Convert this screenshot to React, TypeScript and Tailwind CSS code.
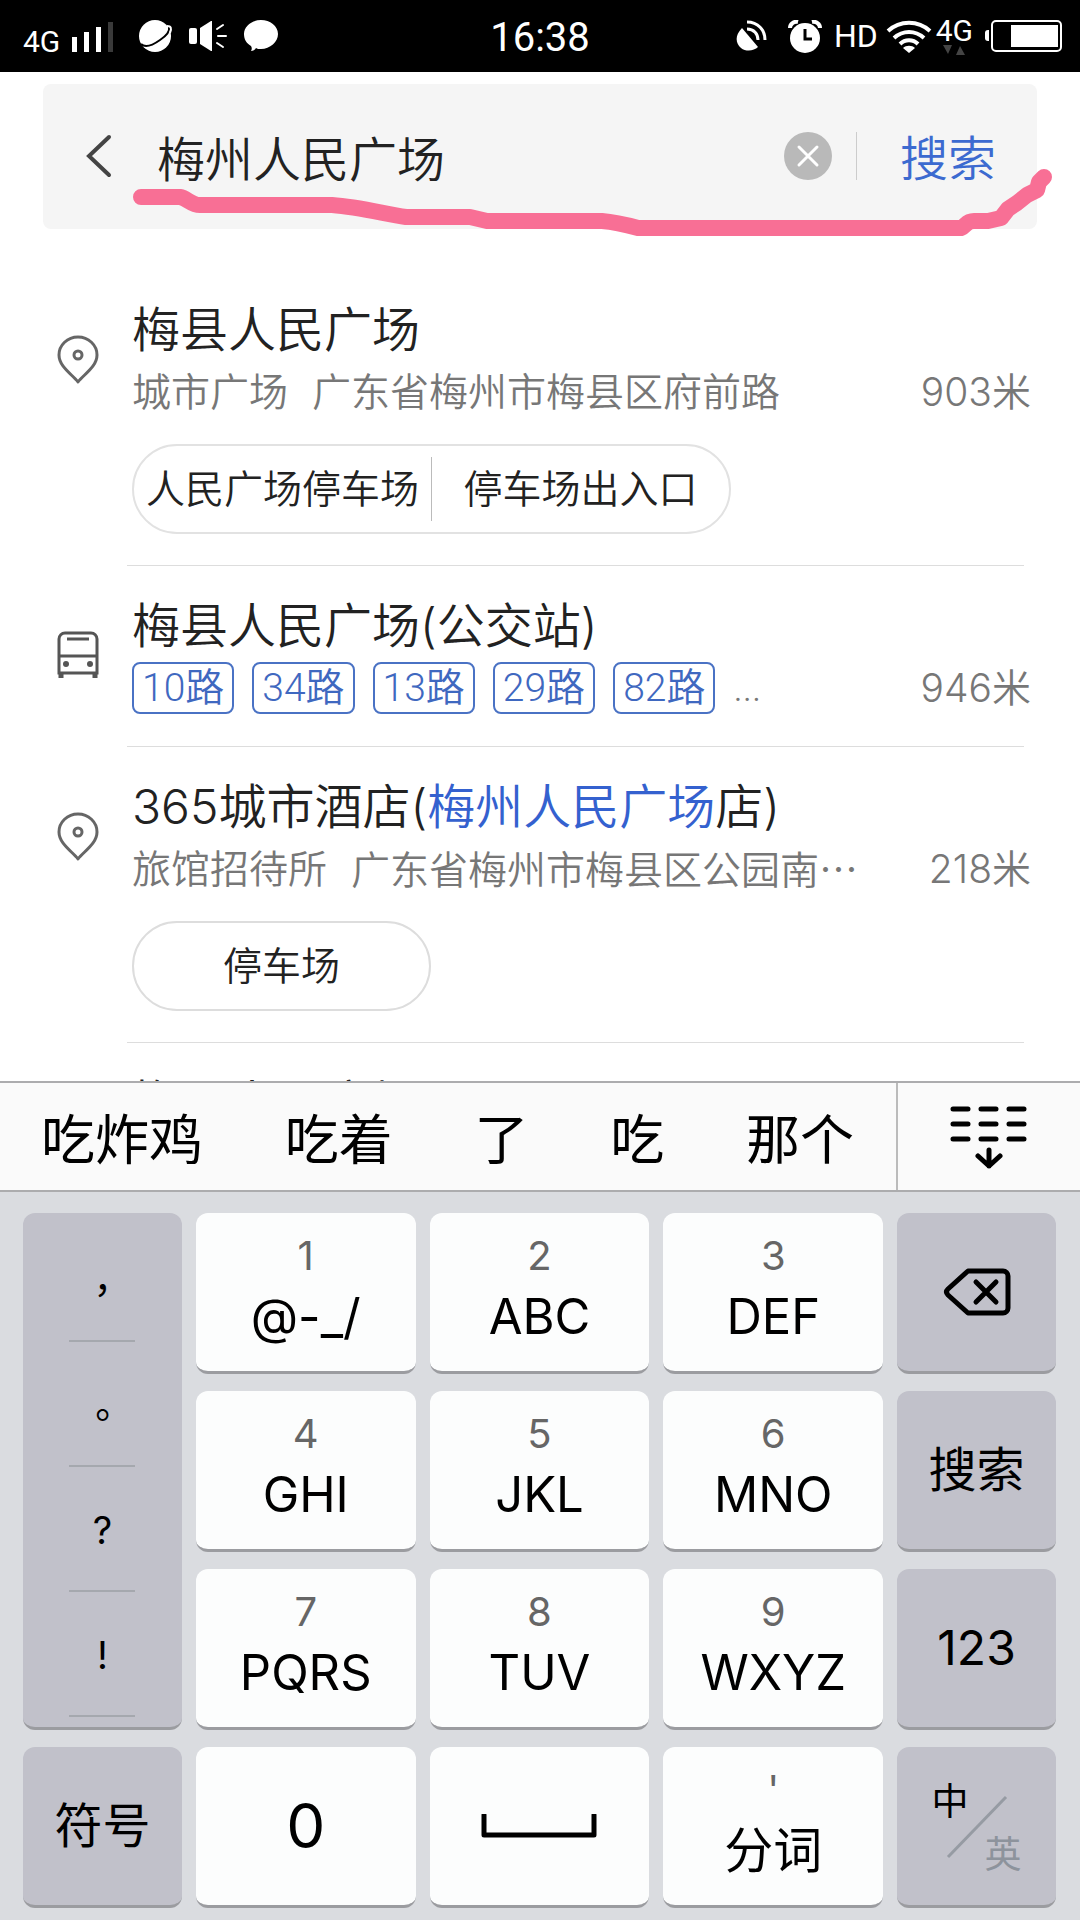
import { useState, type ReactNode } from "react";
import clsx from "clsx";

const uiFont = "font-['Roboto','Noto_Sans_CJK_SC',sans-serif]";
const keyFont = "font-['Inter','Noto_Sans_CJK_SC',sans-serif]";

const routes = ["10路", "34路", "13路", "29路", "82路"];
const candidates = ["吃炸鸡", "吃着", "了", "吃", "那个"];
const punctuation = ["，", "。", "?", "!"];

function PinIcon() {
  return (
    <svg width="42" height="50" viewBox="0 0 42 50" fill="none" stroke="#666" strokeWidth="3">
      <path d="M21 47C16 40 2 32 2 20a19 18 0 0 1 38 0C40 32 26 40 21 47Z" strokeLinejoin="round" />
      <circle cx="21" cy="20" r="4" />
    </svg>
  );
}

function BusIcon() {
  return (
    <svg width="42" height="48" viewBox="0 0 42 48" fill="none" stroke="#555" strokeWidth="3">
      <path d="M2 42V8a6 6 0 0 1 6-6h26a6 6 0 0 1 6 6v34ZM2 25h38M10 8h22" />
      <path d="M4 42v5M38 42v5" strokeWidth="5" />
      <circle cx="9" cy="33" r="3" fill="#555" stroke="none" />
      <circle cx="33" cy="33" r="3" fill="#555" stroke="none" />
    </svg>
  );
}

function StatusBar() {
  return (
    <div className="flex h-[72px] shrink-0 items-center bg-black px-[17px] text-white">
      <div className="flex flex-1 items-center">
        <span className="mt-3 ml-[6px] text-[30px] leading-none">4G</span>
        <svg className="ml-3" width="42" height="32" viewBox="0 0 42 32" fill="#fff">
          <path d="M0 17h5v15H0zM12 12h5v20h-5zM24 7h5v25h-5z" />
          <path d="M36 2h5v30h-5z" fill="#3a3a3a" />
        </svg>
        <svg className="ml-[25px]" width="34" height="34" viewBox="0 0 34 34">
          <circle cx="16" cy="17" r="16" fill="#fff" />
          <path d="M2 25c4 4 12 1 19-4 6-4 10-9 9-13" fill="none" stroke="#000" strokeWidth="2" />
          <path d="M28 7c4 0 5 2 3 7" fill="none" stroke="#fff" strokeWidth="2" />
        </svg>
        <svg className="ml-4" width="38" height="32" viewBox="0 0 38 32">
          <rect y="8" width="8" height="16" rx="2" fill="#fff" />
          <path d="M11 8 22 1h1v30h-1L11 24Z" fill="#fff" />
          <path d="m28 9 6-4M29 16h8M28 23l6 4" stroke="#fff" strokeWidth="2" strokeLinecap="round" />
        </svg>
        <svg className="ml-4" width="36" height="32" viewBox="0 0 36 32" fill="#fff">
          <path d="M18 0c9 0 17 6 17 14s-8 15-17 15c-2 0-4 0-5-1-1 2-3 3-5 3 1-2 1-3 0-5-5-3-7-7-7-12C1 6 9 0 18 0Z" />
        </svg>
      </div>
      <span className="mt-1 text-[40px] leading-none">16:38</span>
      <div className="flex flex-1 items-center justify-end">
        <svg width="32" height="32" viewBox="0 0 32 32" fill="none" stroke="#fff" strokeWidth="3">
          <path d="M6 8C-2 16 0 24 5 28s13 3 17-1Z" fill="#fff" stroke="none" />
          <path d="M11 2c11 0 18 8 18 18M11 9c7 0 11 5 11 11" />
        </svg>
        <svg className="ml-5" width="34" height="33" viewBox="0 0 34 33">
          <circle cx="17" cy="18" r="15" fill="#fff" />
          <path d="M2 8c0-4 4-7 8-6M32 8c0-4-4-7-8-6" fill="none" stroke="#fff" strokeWidth="4" />
          <path d="M17 9v10h7" fill="none" stroke="#000" strokeWidth="3" />
        </svg>
        <span className="ml-3 text-[32px] leading-none">HD</span>
        <svg className="ml-2" width="46" height="34" viewBox="0 0 46 34" fill="none" stroke="#fff" strokeWidth="4">
          <path d="M2 12c12-11 30-11 42 0M8 19c9-8 21-8 30 0M14 25c5-5 13-5 18 0" />
          <path d="m17 29 6 5 6-5c-3-3-9-3-12 0Z" fill="#fff" stroke="none" />
        </svg>
        <div className="ml-1 flex flex-col items-center">
          <span className="text-[30px] leading-7">4G</span>
          <svg width="24" height="10" viewBox="0 0 24 10" fill="#444">
            <path d="M1 0h9L6 9ZM14 10h9L18 1Z" />
          </svg>
        </div>
        <svg className="ml-3" width="78" height="32" viewBox="0 0 78 32">
          <path d="M4 10H3a3 3 0 0 0-3 3v5a3 3 0 0 0 3 3h1Z" fill="#fff" />
          <rect x="7" y="1" width="69" height="30" rx="4" fill="none" stroke="#fff" strokeWidth="2" />
          <rect x="26" y="5" width="47" height="22" fill="#fff" />
        </svg>
      </div>
    </div>
  );
}

function SearchHeader() {
  const [query, setQuery] = useState("梅州人民广场");

  return (
    <header className="relative shrink-0 px-[43px] pt-3">
      <div className="flex h-[145px] items-center rounded-lg bg-[#f5f5f5] pr-[41px] pb-[2px] pl-[41px]">
        <button type="button" aria-label="返回">
          <svg width="30" height="46" viewBox="0 0 30 46" fill="none" stroke="#444" strokeWidth="4" strokeLinecap="round">
            <path d="M25 4 5 23l20 19" />
          </svg>
        </button>
        <input
          aria-label="搜索地点"
          value={query}
          onChange={(e) => setQuery(e.target.value)}
          className="ml-[43px] min-w-0 flex-1 bg-transparent text-5xl font-[350] text-[#222] outline-none"
        />
        <button type="button" aria-label="清除" onClick={() => setQuery("")}>
          <svg width="48" height="48" viewBox="0 0 48 48">
            <circle cx="24" cy="24" r="24" fill="#b9b9b9" />
            <path d="m15 15 18 18M33 15 15 33" stroke="#fff" strokeWidth="3" strokeLinecap="round" />
          </svg>
        </button>
        <span className="ml-6 h-12 w-px bg-[#ccc]" />
        <button type="button" className="ml-[43px] pt-2 text-5xl font-[350] text-[#3c6ad0]">搜索</button>
      </div>
      {/* hand-drawn marker stroke */}
      <svg className="pointer-events-none absolute top-0 left-0 w-full" viewBox="0 0 1080 190" fill="none">
        <path
          d="M141 125H180C187 126 191 133 200 133H332C360 135 385 142 406 145H470L487 149H602C615 150 627 153 638 156H961C966 154 966 149 974 149H988L1001 146 1008 137 1017 131 1027 123 1037 118 1039 110 1044 105"
          stroke="#f86f95"
          strokeWidth="16"
          strokeLinecap="round"
          strokeLinejoin="round"
        />
      </svg>
    </header>
  );
}

type PlaceProps = { icon: ReactNode; title: ReactNode; detail?: ReactNode; distance?: string; children?: ReactNode };

function Place({ icon, title, detail, distance, children }: PlaceProps) {
  return (
    <li className="flex pl-[57px]">
      <div className="w-[75px] shrink-0 pt-[65px]">{icon}</div>
      <div className="relative min-w-0 flex-1 pt-7 pb-[29px]">
        <h2 className="text-5xl leading-[64px] font-[350] text-[#222]">{title}</h2>
        <div className="flex h-[60px] items-center justify-between pr-[49px] text-[39px] font-[350] text-[#777]">
          <div className="flex items-center whitespace-pre">{detail}</div>
          <span>{distance}</span>
        </div>
        {children && <div className="pt-[22px] pb-[3px]">{children}</div>}
        <span className="absolute right-14 bottom-0 left-[-5px] h-px bg-[#ddd]" />
      </div>
    </li>
  );
}

function Key({ digit, label, dark, children }: { digit?: string; label?: string; dark?: boolean; children?: ReactNode }) {
  return (
    <button
      type="button"
      className={clsx(
        "flex flex-col items-center justify-center rounded-xl border-b-3 border-[#9b9ca0] text-black",
        dark ? "bg-[#c1c1ca]" : "bg-[#fcfdfd]"
      )}
    >
      {digit && <span className="text-[40px] leading-[50px] text-[#666]">{digit}</span>}
      {label && <span className={clsx(digit ? "text-[49px] leading-[72px]" : "text-5xl leading-[60px]")}>{label}</span>}
      {children}
    </button>
  );
}

function Keyboard() {
  return (
    <section className={clsx("shrink-0 bg-[#dadce0]", keyFont)}>
      <div className="flex h-[111px] items-stretch border-y-2 border-[#acacae] bg-[#fafafa]">
        <div className="flex flex-1 items-center justify-between pt-2 pr-[42px] pl-[41px] text-[54px]">
          {candidates.map((word) => (
            <button type="button" key={word}>{word}</button>
          ))}
        </div>
        <button type="button" aria-label="收起键盘" className="flex w-[184px] items-center justify-center border-l-2 border-[#bbb]">
          <svg width="78" height="64" viewBox="0 0 78 64" fill="none" stroke="#000" strokeWidth="5" strokeLinecap="round">
            <path d="M3 4h15M31 4h15M59 4h15M3 19h15M31 19h15M59 19h15M3 34h15M31 34h15M59 34h15" />
            <path d="M39 45v16M28 51l11 10 11-10" strokeLinejoin="round" />
          </svg>
        </button>
      </div>
      <div className="grid auto-rows-[161px] grid-cols-[159fr_220fr_220fr_220fr_159fr] gap-x-[14px] gap-y-[17px] pt-[21px] pr-6 pb-3 pl-[23px]">
        <div className="row-span-3 flex flex-col items-center rounded-xl border-b-3 border-[#9b9ca0] bg-[#c1c1ca] pt-1">
          {punctuation.map((mark) => (
            <button
              type="button"
              key={mark}
              className={clsx(
                "h-[125px] w-[66px] border-b-2 border-[#a5a8ae] text-center font-['Inter','Noto_Sans_CJK_TC',sans-serif] text-[38px] text-black",
                // full-width marks sit high in their em box
                mark > "\u3000" ? "pt-6" : "pt-1"
              )}
            >
              {mark}
            </button>
          ))}
        </div>
        <Key digit="1" label="@-_/" />
        <Key digit="2" label="ABC" />
        <Key digit="3" label="DEF" />
        <Key dark>
          <svg width="68" height="48" viewBox="0 0 68 48" fill="none" stroke="#000" strokeWidth="5" strokeLinecap="round" strokeLinejoin="round">
            <path d="M25 3h35a5 5 0 0 1 5 5v32a5 5 0 0 1-5 5H25L5 27q-3-3 0-6Z" />
            <path d="m33 14 20 20M53 14 33 34" />
          </svg>
        </Key>
        <Key digit="4" label="GHI" />
        <Key digit="5" label="JKL" />
        <Key digit="6" label="MNO" />
        <Key dark label="搜索" />
        <Key digit="7" label="PQRS" />
        <Key digit="8" label="TUV" />
        <Key digit="9" label="WXYZ" />
        <Key dark label="123" />
        <Key dark label="符号" />
        <Key>
          <span className="text-[62px] leading-none">0</span>
        </Key>
        <Key>
          <svg aria-label="空格" width="116" height="24" viewBox="0 0 116 24" fill="none" stroke="#000" strokeWidth="5">
            <path d="M3 1v20h110V1" strokeLinecap="round" strokeLinejoin="round" />
          </svg>
        </Key>
        <Key digit="'" label="分词" />
        <Key dark>
          <span className="relative block h-[94px] w-[90px] text-[37px] leading-none">
            <span className="absolute top-1 left-0">中</span>
            <svg className="absolute inset-0" width="90" height="94" viewBox="0 0 90 94" stroke="#969ba3" strokeWidth="3">
              <path d="M16 78 74 18" />
            </svg>
            <span className="absolute right-0 bottom-0 text-[#8d939c]">英</span>
          </span>
        </Key>
      </div>
    </section>
  );
}

export default function App() {
  return (
    <div className={clsx("flex h-screen flex-col overflow-hidden bg-white", uiFont)}>
      <StatusBar />
      <SearchHeader />
      <main className={clsx("min-h-0 flex-1 overflow-hidden pt-[41px]", keyFont)}>
        <ul>
          <Place icon={<PinIcon />} title="梅县人民广场" detail={<><span>城市广场</span><span className="ml-6">广东省梅州市梅县区府前路</span></>} distance="903米">
            <div className="flex h-[90px] w-[599px] items-center rounded-full border-2 border-[#e2e2e2] text-[39px] font-[350] text-[#222]">
              <button type="button" className="flex-1">人民广场停车场</button>
              <span className="h-16 w-px bg-[#bbb]" />
              <button type="button" className="flex-1">停车场出入口</button>
            </div>
          </Place>
          <Place
            icon={<BusIcon />}
            title="梅县人民广场(公交站)"
            distance="946米"
            detail={
              <div className={clsx("flex items-center", uiFont)}>
                {routes.map((route) => (
                  <span key={route} className="mr-[18px] rounded-lg border-2 border-[#4a72c4] px-2 leading-[48px] text-[#3f68c0]">
                    {route}
                  </span>
                ))}
                <span>...</span>
              </div>
            }
          />
          <Place
            icon={<PinIcon />}
            title={<>365城市酒店(<span className="text-[#3461cf]">梅州人民广场</span>店)</>}
            detail={<><span>旅馆招待所</span><span className="ml-6">广东省梅州市梅县区公园南<span className="font-['Noto_Sans_CJK_SC',sans-serif]">⋯</span></span></>}
            distance="218米"
          >
            <div className="flex h-[90px] w-[299px] rounded-full border-2 border-[#ddd] text-[39px] font-[350] text-[#222]">
              <button type="button" className="flex-1">停车场</button>
            </div>
          </Place>
          <Place icon={<PinIcon />} title="梅县人民广场" />
        </ul>
      </main>
      <Keyboard />
    </div>
  );
}
